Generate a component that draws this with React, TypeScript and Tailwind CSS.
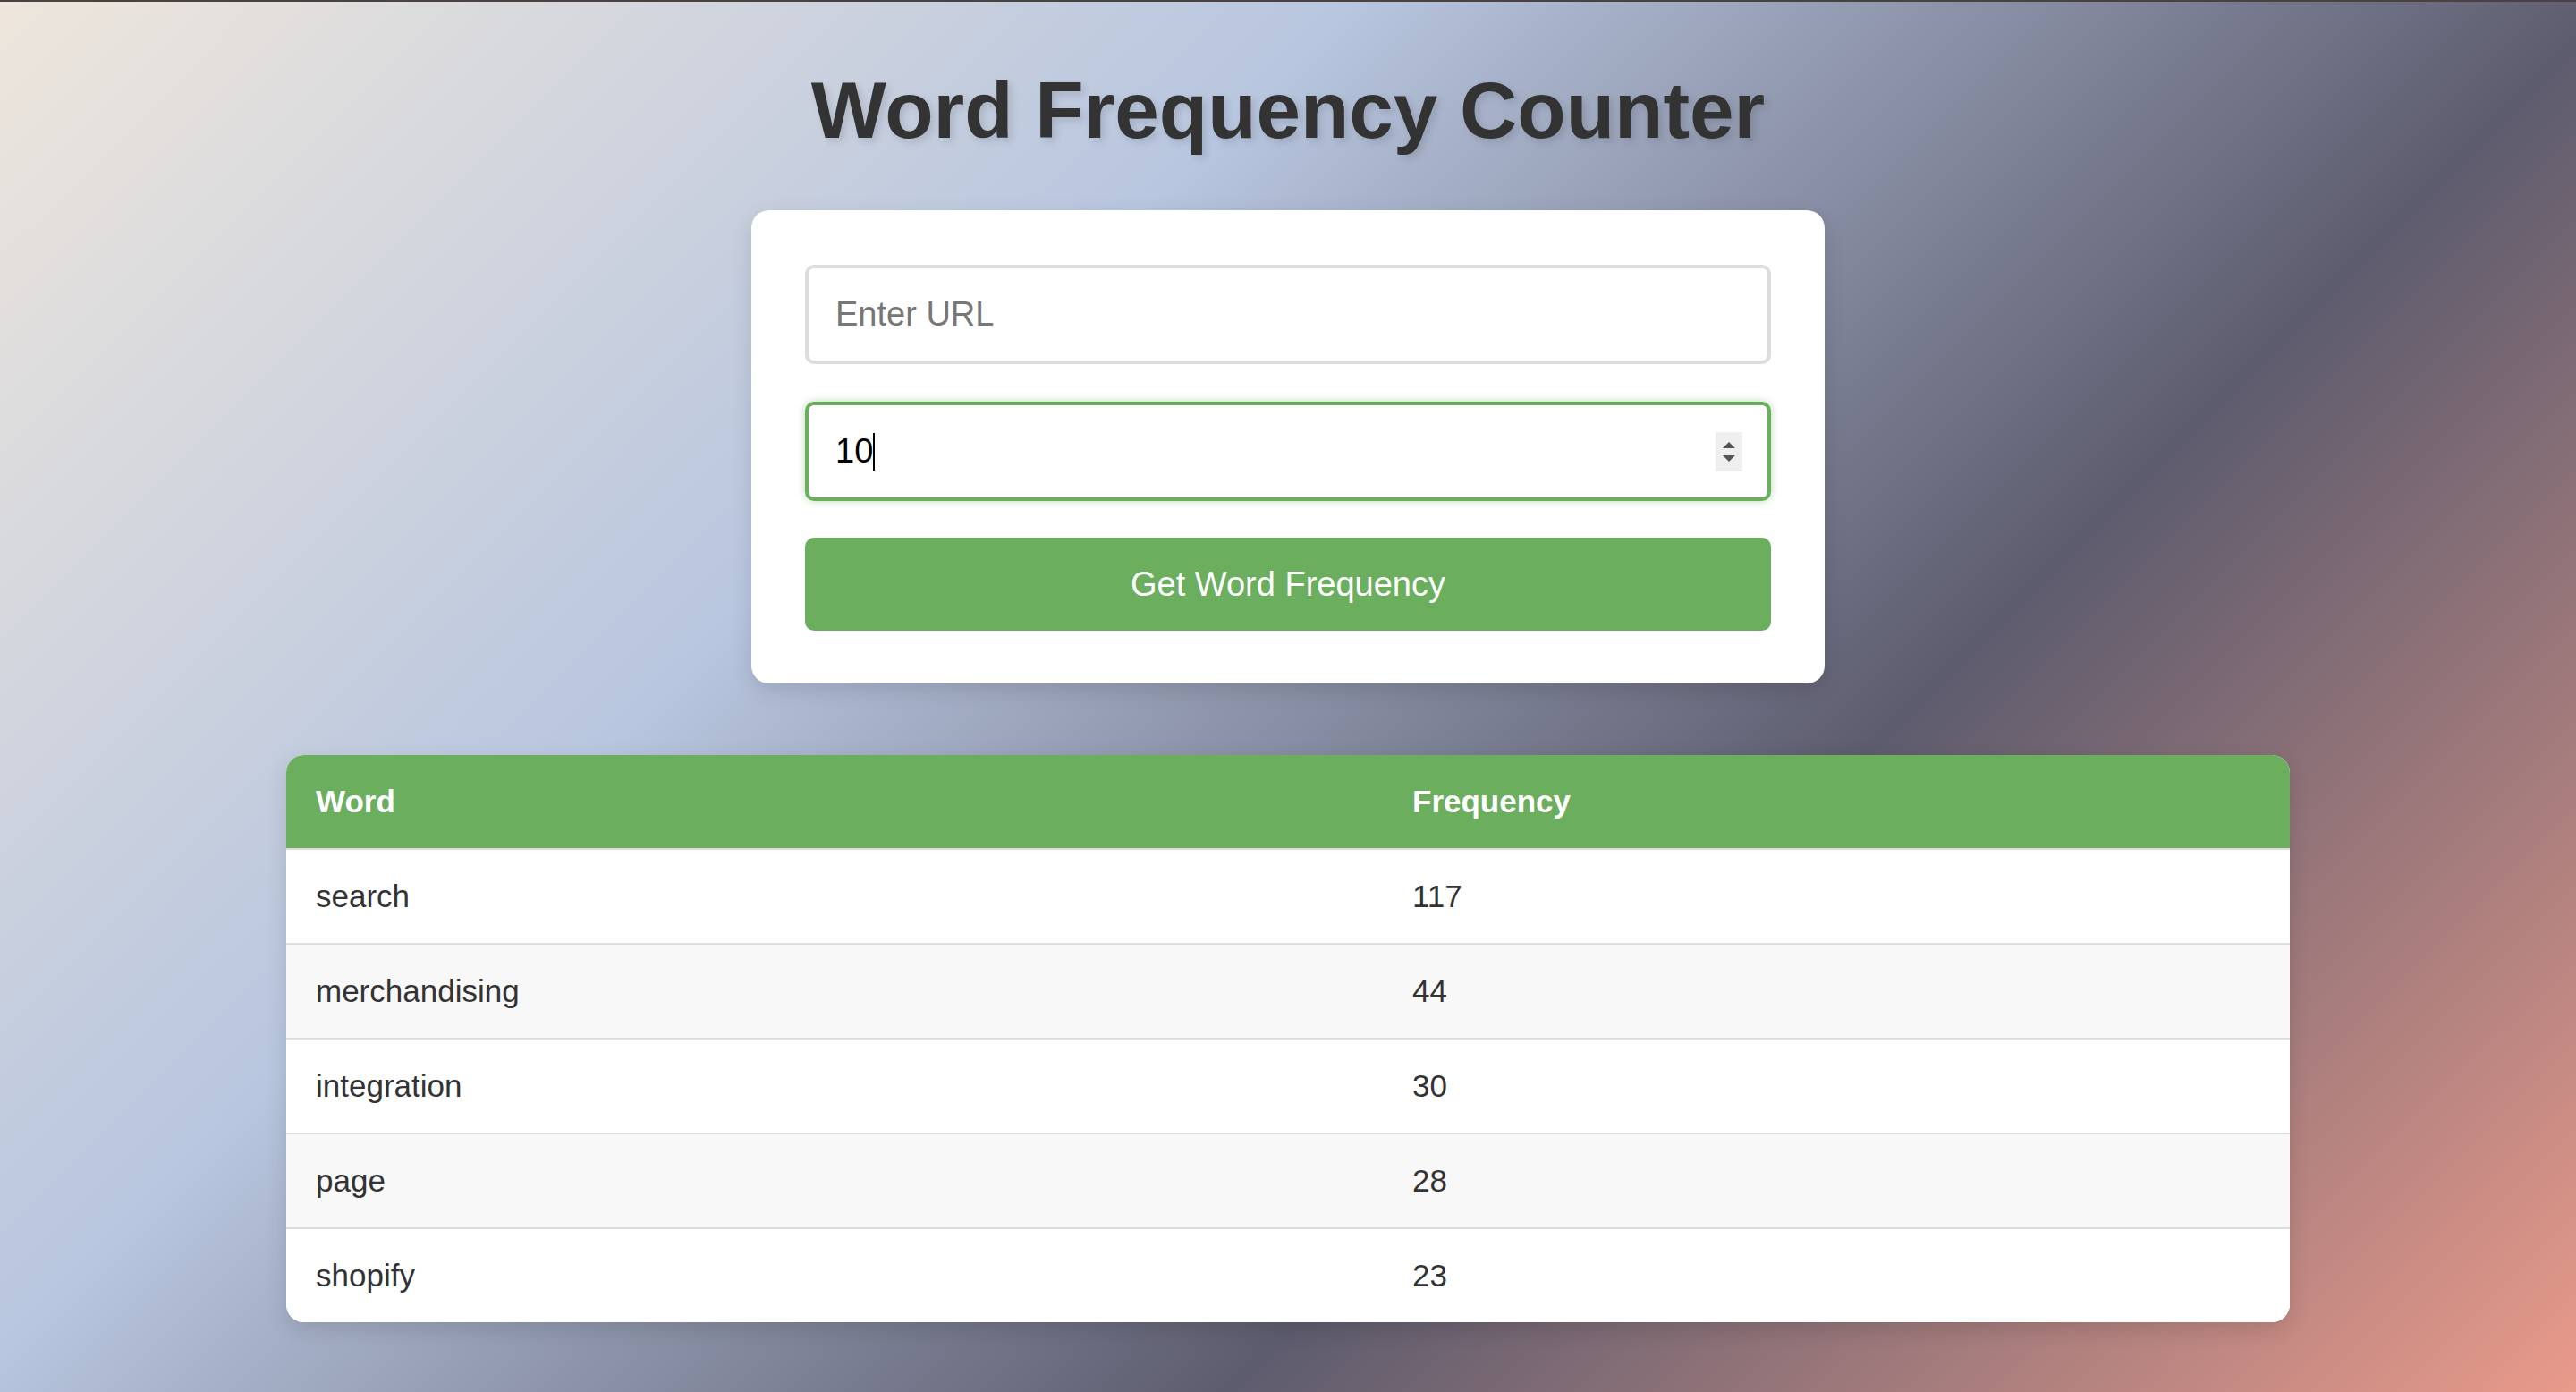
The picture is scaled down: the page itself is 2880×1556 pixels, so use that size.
import React from "react";

const rows = [
  { word: "search", count: 117 },
  { word: "merchandising", count: 44 },
  { word: "integration", count: 30 },
  { word: "page", count: 28 },
  { word: "shopify", count: 23 },
];

// Word frequency tool: form card on top, results table below.
export default function App() {
  return (
    <div className="min-h-screen border-t-[2px] border-[#4a4240] bg-[linear-gradient(135deg,#eee6dc_0%,#b8c6df_34%,#5d5c6e_66%,#e99a8a_100%)] pb-[79px] pt-[72px] font-['Liberation_Sans',Arial,sans-serif] text-[#333]">
      <h1 className="text-center text-[89px] font-bold leading-[98px] text-[#333] [text-shadow:4px_4px_8px_rgba(0,0,0,0.12)]">
        Word Frequency Counter
      </h1>

      <div className="mx-auto mt-[63px] w-[1200px] rounded-[20px] bg-white px-[60px] pb-[59px] pt-[61px] shadow-[0_8px_24px_rgba(0,0,0,0.12)]">
        <div className="flex h-[111px] items-center rounded-[10px] border-[4px] border-[#ddd] px-[30px] text-[38px] text-[#777]">
          Enter URL
        </div>

        <div className="mt-[42px] flex h-[111px] items-center rounded-[10px] border-[4px] border-[#6aae5e] px-[30px] text-[38px] text-black shadow-[0_0_10px_rgba(106,174,94,0.45)]">
          <span>10</span>
          <span className="h-[42px] w-[2px] bg-black" />
          <div className="ml-auto mr-[-2px] flex h-[44px] w-[30px] flex-col items-center justify-center gap-[8px] bg-[#efefef]">
            <span className="h-0 w-0 border-x-[7px] border-b-[7px] border-x-transparent border-b-[#555]" />
            <span className="h-0 w-0 border-x-[7px] border-t-[7px] border-x-transparent border-t-[#555]" />
          </div>
        </div>

        <button className="mt-[41px] flex h-[104px] w-full items-center justify-center rounded-[10px] bg-[#6aae5e] text-[38px] text-white">
          Get Word Frequency
        </button>
      </div>

      <div className="mx-auto mt-[80px] w-[2240px] overflow-hidden rounded-[20px] bg-white shadow-[0_8px_24px_rgba(0,0,0,0.12)]">
        <table className="w-full table-fixed border-collapse text-left text-[35px] leading-[40px]">
          <colgroup>
            <col className="w-[1226px]" />
            <col />
          </colgroup>
          <thead>
            <tr className="border-b-[2px] border-[#ddd] bg-[#6aae5e] text-white">
              <th className="px-[33px] py-[32px] font-bold">Word</th>
              <th className="px-[33px] py-[32px] font-bold">Frequency</th>
            </tr>
          </thead>
          <tbody>
            {rows.map((r, i) => (
              <tr
                key={r.word}
                className={
                  (i % 2 === 1 ? "bg-[#f8f8f8] " : "bg-white ") +
                  (i < rows.length - 1 ? "border-b-[2px] border-[#ddd]" : "")
                }
              >
                <td className="px-[33px] py-[32px]">{r.word}</td>
                <td className="px-[33px] py-[32px]">{r.count}</td>
              </tr>
            ))}
          </tbody>
        </table>
      </div>
    </div>
  );
}
